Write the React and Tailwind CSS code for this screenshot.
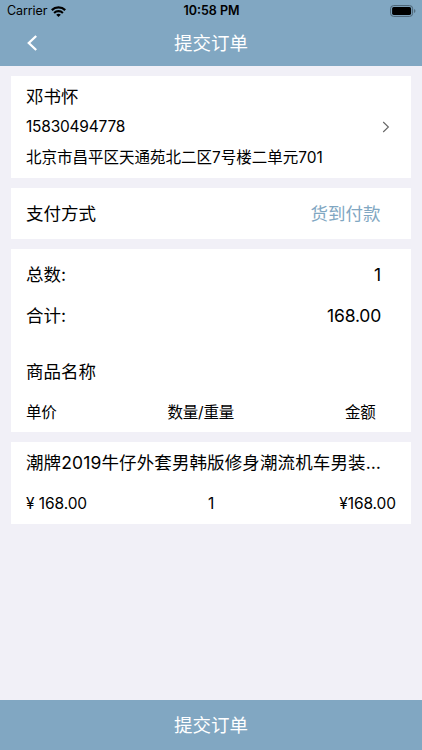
const product = {
  name: "潮牌2019牛仔外套男韩版修身潮流机车男装…",
  price: "¥ 168.00",
  count: 1,
  amount: "¥168.00",
};

const StatusBar = () => (
  <div className="grid h-[22px] grid-cols-3 items-center pl-[7px] pr-[6px] text-black">
    <div className="flex items-center gap-1">
      <span className="text-[12.5px] leading-[22px] tracking-[-0.1px]">Carrier</span>
      <svg width="15" height="11" viewBox="0 0 15 11" fill="none" stroke="currentColor">
        <path d="M.8 4.1a9.6 9.6 0 0 1 13.4 0" strokeWidth="2.3" />
        <path d="M3.1 6.9a6.3 6.3 0 0 1 8.8 0" strokeWidth="2.1" />
        <path d="M7.5 11 5.2 8.8a3.3 3.3 0 0 1 4.6 0Z" fill="currentColor" stroke="none" />
      </svg>
    </div>
    <span className="text-center text-[12.5px] font-semibold leading-[22px]">
      10:58 PM
    </span>
    <svg className="-mt-px justify-self-end" width="26" height="12" viewBox="0 0 26 12">
      <rect x=".6" y=".6" width="22" height="10.8" rx="3" fill="none" stroke="#4b6273" />
      <rect x="2.1" y="2.1" width="19" height="7.8" rx="1.6" />
      <path d="M24.2 4v4c1.6-.6 1.6-3.4 0-4Z" fill="#4b6273" />
    </svg>
  </div>
);

const Header = () => (
  <header className="h-[66px] shrink-0 bg-[#81a7c2]">
    <StatusBar />
    <div className="grid h-[42px] grid-cols-[60px_1fr_60px] items-center text-white">
      <svg className="ml-[27px]" width="11" height="16" viewBox="0 0 11 16" fill="none" stroke="currentColor" strokeWidth="2.3">
        <path d="M9.2 1 1.8 8l7.4 7" />
      </svg>
      <h1 className="text-center text-[18.5px] leading-6">提交订单</h1>
    </div>
  </header>
);

const Card = ({ children, className }) => (
  <section className={`bg-white pl-[15.5px] ${className}`}>{children}</section>
);

export default function App() {
  return (
    <div className="flex h-[750px] w-[422px] flex-col overflow-hidden bg-[#f1f0f7] font-['Inter','Noto_Sans_CJK_SC',sans-serif] text-[17.5px] leading-6 text-black">
      <Header />

      <main className="flex flex-1 flex-col gap-[10px] pl-[10.5px] pr-[11px] pt-[10px]">
        {/* Address */}
        <Card className="flex h-[102px] items-center justify-between pr-[21px]">
          <div>
            <p className="pb-[6px]">邓书怀</p>
            <p className="pb-[7px] text-[15.5px] tracking-[-0.22px]">15830494778</p>
            <p className="text-[15.5px]">
              北京市昌平区天通苑北二区7号楼二单元701
            </p>
          </div>
          <svg width="8" height="12" viewBox="0 0 8 12" fill="none" stroke="#666" strokeWidth="1.1">
            <path d="m1.2 1 5.2 5-5.2 5" />
          </svg>
        </Card>

        {/* Payment */}
        <Card className="flex h-[51px] items-center justify-between pr-[30.5px]">
          <span>支付方式</span>
          <span className="text-[#81a7c2]">货到付款</span>
        </Card>

        {/* Totals */}
        <Card className="h-[183px] pt-[14px]">
          <div className="flex justify-between pr-[30px]">
            <span>总数:</span>
            <span>1</span>
          </div>
          <div className="flex justify-between pr-[30px] pt-[17px]">
            <span>合计:</span>
            <span className="tracking-[-0.2px]">168.00</span>
          </div>
          <p className="pt-[32px]">商品名称</p>
          <div className="grid grid-cols-3 pr-[35.5px] pt-[17px] text-[15.5px] tracking-[-0.2px]">
            <span>单价</span>
            <span className="text-center">数量/重量</span>
            <span className="text-right">金额</span>
          </div>
        </Card>

        {/* Product */}
        <Card className="h-[82px] pr-[15px] pt-[9px]">
          <p className="whitespace-nowrap tracking-[0.12px]">{product.name}</p>
          <div className="grid grid-cols-3 pt-[17px] text-[15.5px] tracking-[-0.08px]">
            <span>{product.price}</span>
            <span className="text-center">{product.count}</span>
            <span className="text-right">{product.amount}</span>
          </div>
        </Card>
      </main>

      <button className="h-[50px] shrink-0 bg-[#81a7c2] text-[18.5px] text-white">
        提交订单
      </button>
    </div>
  );
}
